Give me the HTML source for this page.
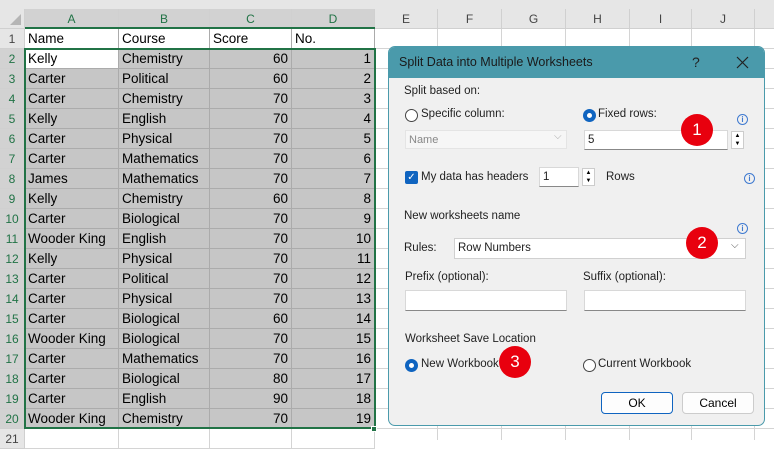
<!DOCTYPE html>
<html><head><meta charset="utf-8"><style>
*{box-sizing:border-box;margin:0;padding:0}
body{width:774px;height:440px;overflow:hidden;background:#fff;font-family:"Liberation Sans",sans-serif;position:relative}
.a{position:absolute}
.hd{position:absolute;top:9px;height:20px;background:#e6e6e6;border-right:1px solid #d0d0d0;color:#444;font-size:12px;text-align:center;line-height:20px;border-bottom:1px solid #d0d0d0}
.hs{background:#d2d2d2;color:#217346}
.rn{position:absolute;left:0;width:25px;height:20px;background:#e6e6e6;border-bottom:1px solid #d0d0d0;border-right:1px solid #d0d0d0;font-size:12px;color:#444;text-align:center;line-height:20px}
.rs{background:#d2d2d2;color:#217346}
.c{position:absolute;height:20px;border-right:1px solid #ababab;border-bottom:1px solid #ababab;font-size:13.5px;line-height:20px;padding:0 3px;white-space:nowrap;overflow:hidden;color:#000}
.g{background:#c6c6c6}
.r{text-align:right}
.dl{font-size:11.5px;color:#222;position:absolute}
.inp{position:absolute;background:#fff;border:1px solid #d8d8d8;border-bottom:1px solid #888}
.rad{position:absolute;width:13px;height:13px;border-radius:50%;border:1px solid #444;background:#fff}
.rad.on{border:4px solid #0f64c0}
.badge{position:absolute;width:32px;height:32px;border-radius:50%;background:#e8000e;color:#fff;font-size:17px;text-align:center;line-height:32px}
.info{position:absolute;width:11px;height:11px;border-radius:50%;border:1px solid #3f7ad0;color:#3f7ad0;font-size:8px;line-height:9px;text-align:center;font-weight:bold}
</style></head><body>
<div class="a" style="left:0;top:0;width:774px;height:9px;background:#e6e6e6"></div>
<div class="hd" style="left:0;width:25px"></div>
<div class="a" style="left:10px;top:14px;width:0;height:0;border-left:11px solid transparent;border-bottom:11px solid #b5b5b5"></div>
<div class="hd hs" style="left:25px;width:94px">A</div>
<div class="hd hs" style="left:119px;width:91px">B</div>
<div class="hd hs" style="left:210px;width:82px">C</div>
<div class="hd hs" style="left:292px;width:83px">D</div>
<div class="hd" style="left:375px;width:63px">E</div>
<div class="hd" style="left:438px;width:64px">F</div>
<div class="hd" style="left:502px;width:64px">G</div>
<div class="hd" style="left:566px;width:64px">H</div>
<div class="hd" style="left:630px;width:62px">I</div>
<div class="hd" style="left:692px;width:63px">J</div>
<div class="hd" style="left:755px;width:30px"></div>
<div class="a" style="left:25px;top:27px;width:350px;height:2px;background:#217346"></div>
<div class="a" style="left:375px;top:29px;width:400px;height:411px;background:repeating-linear-gradient(to bottom,#fff 0,#fff 19px,#d4d4d4 19px,#d4d4d4 20px)"></div>
<div class="a" style="left:437px;top:29px;width:1px;height:411px;background:#d4d4d4"></div>
<div class="a" style="left:501px;top:29px;width:1px;height:411px;background:#d4d4d4"></div>
<div class="a" style="left:565px;top:29px;width:1px;height:411px;background:#d4d4d4"></div>
<div class="a" style="left:629px;top:29px;width:1px;height:411px;background:#d4d4d4"></div>
<div class="a" style="left:691px;top:29px;width:1px;height:411px;background:#d4d4d4"></div>
<div class="a" style="left:754px;top:29px;width:1px;height:411px;background:#d4d4d4"></div>
<div id="rows"></div>
<script>
var d=[["Name","Course","Score","No."],["Kelly","Chemistry",60,1],["Carter","Political",60,2],["Carter","Chemistry",70,3],["Kelly","English",70,4],["Carter","Physical",70,5],["Carter","Mathematics",70,6],["James","Mathematics",70,7],["Kelly","Chemistry",60,8],["Carter","Biological",70,9],["Wooder King","English",70,10],["Kelly","Physical",70,11],["Carter","Political",70,12],["Carter","Physical",70,13],["Carter","Biological",60,14],["Wooder King","Biological",70,15],["Carter","Mathematics",70,16],["Carter","Biological",80,17],["Carter","English",90,18],["Wooder King","Chemistry",70,19]];
var xs=[25,119,210,292,375],h="";
for(var i=0;i<21;i++){var y=29+i*20;var sel=i>=1&&i<=19;
h+='<div class="rn'+(sel?' rs':'')+'" style="top:'+y+'px">'+(i+1)+'</div>';
if(i<20){for(var j=0;j<4;j++){var g=(i>=1&&!(i==1&&j==0));var r=(i>=1&&j>=2);
h+='<div class="c'+(g?' g':'')+(r?' r':'')+'" style="left:'+xs[j]+'px;top:'+y+'px;width:'+(xs[j+1]-xs[j])+'px">'+d[i][j]+'</div>';}}
else{for(var j=0;j<4;j++)h+='<div class="c" style="left:'+xs[j]+'px;top:'+y+'px;width:'+(xs[j+1]-xs[j])+'px;border-color:#d4d4d4"></div>';}}
document.getElementById('rows').innerHTML=h;
</script>
<div class="a" style="left:24px;top:48px;width:352px;height:381px;border:2px solid #217346"></div>
<div class="a" style="left:371px;top:426px;width:6px;height:6px;background:#217346;border:1px solid #fff"></div>

<div class="a" style="left:388px;top:46px;width:377px;height:380px;background:#f0f0f0;border:1px solid #4a9aab;border-radius:7px;overflow:hidden">
<div class="a" style="left:0;top:0;width:377px;height:31px;background:#4a9aab"></div>
<div class="dl" style="left:10px;top:8px;font-size:12.5px;color:#1a1a1a">Split Data into Multiple Worksheets</div>
<div class="dl" style="left:303px;top:7px;font-size:14px">?</div>
<svg class="a" style="left:347px;top:9px" width="13" height="13"><path d="M1 1L12 12M12 1L1 12" stroke="#222" stroke-width="1.2"/></svg>
</div>
<div class="dl" style="left:404px;top:85px">Split based on:</div>
<div class="rad" style="left:405px;top:109px"></div>
<div class="dl" style="left:421px;top:108px">Specific column:</div>
<div class="rad on" style="left:583px;top:109px"></div>
<div class="dl" style="left:598px;top:108px">Fixed rows:</div>
<div class="info" style="left:737px;top:114px">i</div>
<div class="a" style="left:405px;top:130px;width:162px;height:19px;background:#f6f6f6;border:1px solid #e4e4e4"></div>
<div class="dl" style="left:409px;top:134px;color:#888;font-size:11px">Name</div>
<div class="dl" style="left:554px;top:131px;color:#aaa;font-size:10px">⌵</div>
<div class="inp" style="left:584px;top:130px;width:144px;height:20px"></div>
<div class="dl" style="left:588px;top:134px">5</div>
<div class="a" style="left:731px;top:131px;width:13px;height:18px;border:1px solid #ccc;background:#fff;font-size:6px;text-align:center;line-height:8px">▲<br>▼</div>
<div class="a" style="left:405px;top:171px;width:13px;height:13px;background:#0f64c0;border-radius:2px;color:#fff;font-size:10px;line-height:13px;text-align:center">✓</div>
<div class="dl" style="left:421px;top:171px">My data has headers</div>
<div class="inp" style="left:539px;top:167px;width:40px;height:20px"></div>
<div class="dl" style="left:543px;top:171px">1</div>
<div class="a" style="left:582px;top:168px;width:13px;height:18px;border:1px solid #ccc;background:#fff;font-size:6px;text-align:center;line-height:8px">▲<br>▼</div>
<div class="dl" style="left:606px;top:171px">Rows</div>
<div class="info" style="left:744px;top:173px">i</div>
<div class="dl" style="left:404px;top:210px">New worksheets name</div>
<div class="info" style="left:737px;top:223px">i</div>
<div class="dl" style="left:404px;top:242px">Rules:</div>
<div class="a" style="left:454px;top:238px;width:292px;height:21px;background:#fff;border:1px solid #d0d0d0"></div>
<div class="dl" style="left:458px;top:242px">Row Numbers</div>
<div class="dl" style="left:731px;top:240px;color:#555;font-size:10px">⌵</div>
<div class="dl" style="left:405px;top:271px">Prefix (optional):</div>
<div class="dl" style="left:583px;top:271px">Suffix (optional):</div>
<div class="inp" style="left:405px;top:290px;width:162px;height:21px"></div>
<div class="inp" style="left:584px;top:290px;width:162px;height:21px"></div>
<div class="dl" style="left:405px;top:333px">Worksheet Save Location</div>
<div class="rad on" style="left:405px;top:359px"></div>
<div class="dl" style="left:421px;top:358px">New Workbook</div>
<div class="rad" style="left:583px;top:359px"></div>
<div class="dl" style="left:598px;top:358px">Current Workbook</div>
<div class="a" style="left:601px;top:392px;width:72px;height:22px;background:#fdfdfd;border:1px solid #0f64c0;border-radius:4px;font-size:12px;text-align:center;line-height:20px">OK</div>
<div class="a" style="left:682px;top:392px;width:72px;height:22px;background:#fdfdfd;border:1px solid #ccc;border-radius:4px;font-size:12px;text-align:center;line-height:20px">Cancel</div>
<div class="badge" style="left:681px;top:114px">1</div>
<div class="badge" style="left:686px;top:227px">2</div>
<div class="badge" style="left:499px;top:346px">3</div>
</body></html>
